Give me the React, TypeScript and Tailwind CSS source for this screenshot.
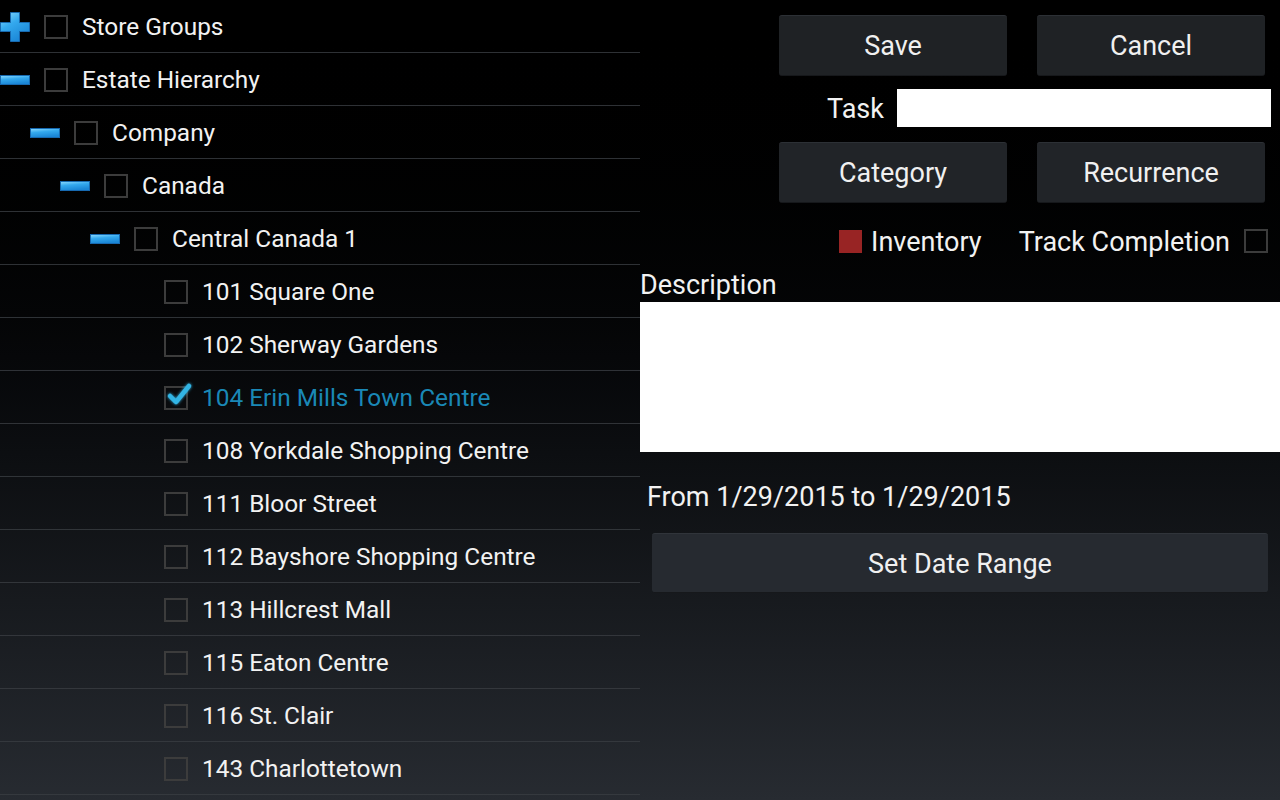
import React from "react";

type Node = { label: string; level: number; icon?: "plus" | "minus"; checked?: boolean };

const nodes: Node[] = [
  { label: "Store Groups", level: 0, icon: "plus" },
  { label: "Estate Hierarchy", level: 0, icon: "minus" },
  { label: "Company", level: 1, icon: "minus" },
  { label: "Canada", level: 2, icon: "minus" },
  { label: "Central Canada 1", level: 3, icon: "minus" },
  { label: "101 Square One", level: 4 },
  { label: "102 Sherway Gardens", level: 4 },
  { label: "104 Erin Mills Town Centre", level: 4, checked: true },
  { label: "108 Yorkdale Shopping Centre", level: 4 },
  { label: "111 Bloor Street", level: 4 },
  { label: "112 Bayshore Shopping Centre", level: 4 },
  { label: "113 Hillcrest Mall", level: 4 },
  { label: "115 Eaton Centre", level: 4 },
  { label: "116 St. Clair", level: 4 },
  { label: "143 Charlottetown", level: 4 },
];

const indents = ["pl-0", "pl-[30px]", "pl-[60px]", "pl-[90px]", "pl-[120px]"];

function PlusIcon() {
  return (
    <svg width="30" height="30" viewBox="0 0 30 30">
      <defs>
        <linearGradient id="pg" x1="0" y1="0" x2="0.6" y2="1">
          <stop offset="0" stopColor="#8fdcff" />
          <stop offset="0.45" stopColor="#34a9ee" />
          <stop offset="1" stopColor="#1a86d6" />
        </linearGradient>
      </defs>
      <path
        d="M10.5 0.5 H19.5 V10.5 H29.5 V19.5 H19.5 V29.5 H10.5 V19.5 H0.5 V10.5 H10.5 Z"
        fill="url(#pg)"
        stroke="#1769b0"
        strokeWidth="1"
      />
    </svg>
  );
}

function MinusIcon() {
  return (
    <svg width="30" height="10" viewBox="0 0 30 10">
      <defs>
        <linearGradient id="mg" x1="0" y1="0" x2="0.3" y2="1">
          <stop offset="0" stopColor="#8fdcff" />
          <stop offset="0.45" stopColor="#34a9ee" />
          <stop offset="1" stopColor="#1a86d6" />
        </linearGradient>
      </defs>
      <rect x="0.5" y="0.5" width="29" height="9" fill="url(#mg)" stroke="#1769b0" strokeWidth="1" />
    </svg>
  );
}

function Checkbox({ checked }: { checked?: boolean }) {
  return (
    <div className="relative w-6 h-6 shrink-0 border-2 border-[#3c3c3c]">
      {checked && (
        <svg className="absolute -left-[1px] -top-[9px]" width="30" height="30" viewBox="0 0 30 30">
          <defs>
            <filter id="glow" x="-30%" y="-30%" width="160%" height="160%">
              <feGaussianBlur stdDeviation="1.5" result="b" />
              <feMerge>
                <feMergeNode in="b" />
                <feMergeNode in="SourceGraphic" />
              </feMerge>
            </filter>
          </defs>
          <path
            d="M5 17 L11 23 L24 7"
            fill="none"
            stroke="#33b5e5"
            strokeWidth="4.5"
            strokeLinecap="round"
            strokeLinejoin="round"
            filter="url(#glow)"
          />
        </svg>
      )}
    </div>
  );
}

function HoloButton({ children, className = "" }: { children: React.ReactNode; className?: string }) {
  return (
    <div
      className={
        "flex items-center justify-center pt-[2px] rounded-[3px] border-t border-t-[#2c3035] border-b border-b-[#16181b] text-[27px] leading-none text-[#f0f0f0] " +
        className
      }
    >
      {children}
    </div>
  );
}

export default function App() {
  return (
    <div
      className="w-[1280px] h-[800px] overflow-hidden flex bg-gradient-to-b from-[#000000] to-[#272b31] text-[#f2f2f2]"
      style={{ fontFamily: "Roboto, 'Noto Sans', sans-serif" }}
    >
      {/* Left tree */}
      <div className="w-[640px] flex flex-col">
        {nodes.map((n, i) => (
          <div key={i} className="h-[53px] shrink-0 border-b border-[#3a3d42]/80 flex items-center">
            <div className={"flex items-center pt-[2px] " + indents[n.level]}>
              <div className="w-[30px] h-[30px] flex items-center justify-center shrink-0">
                {n.icon === "plus" && <PlusIcon />}
                {n.icon === "minus" && <MinusIcon />}
              </div>
              <div className="ml-[14px]">
                <Checkbox checked={n.checked} />
              </div>
              <span
                className={
                  "ml-[14px] text-[24.4px] leading-none whitespace-nowrap " +
                  (n.checked ? "text-[#1a88b6]" : "text-[#f2f2f2]")
                }
              >
                {n.label}
              </span>
            </div>
          </div>
        ))}
      </div>

      {/* Right form */}
      <div className="w-[640px] flex flex-col">
        <div className="flex justify-end gap-[30px] pr-[15px] pt-[15px]">
          <HoloButton className="w-[228px] h-[61px] bg-[#1f2225]">Save</HoloButton>
          <HoloButton className="w-[228px] h-[61px] bg-[#1f2225]">Cancel</HoloButton>
        </div>
        <div className="flex justify-end items-center gap-[13px] pr-[9px] mt-[13px]">
          <span className="text-[27px] leading-none pt-[2px]">Task</span>
          <div className="w-[374px] h-[38px] bg-white" />
        </div>
        <div className="flex justify-end gap-[30px] pr-[15px] mt-[15px]">
          <HoloButton className="w-[228px] h-[61px] bg-[#212428]">Category</HoloButton>
          <HoloButton className="w-[228px] h-[61px] bg-[#212428]">Recurrence</HoloButton>
        </div>
        <div className="flex justify-end items-center pr-[12px] mt-[26px] h-[24px]">
          <div className="w-[23px] h-[23px] bg-[#982424]" />
          <span className="ml-[9px] text-[27px] leading-none pt-[2px]">Inventory</span>
          <span className="ml-[37px] text-[27px] leading-none pt-[2px]">Track Completion</span>
          <div className="ml-[14px]">
            <Checkbox />
          </div>
        </div>
        <div className="mt-[18px] h-[28px] flex items-center text-[27px] leading-none">Description</div>
        <div className="mt-[3px] h-[150px] bg-white" />
        <div className="mt-[31px] pl-[7px] h-[28px] flex items-center text-[27px] leading-none">
          From 1/29/2015 to 1/29/2015
        </div>
        <div className="mt-[22px] pl-[12px] pr-[12px]">
          <HoloButton className="w-full h-[60px] bg-[#262a30] border-t-[#30343a]">Set Date Range</HoloButton>
        </div>
      </div>
    </div>
  );
}
